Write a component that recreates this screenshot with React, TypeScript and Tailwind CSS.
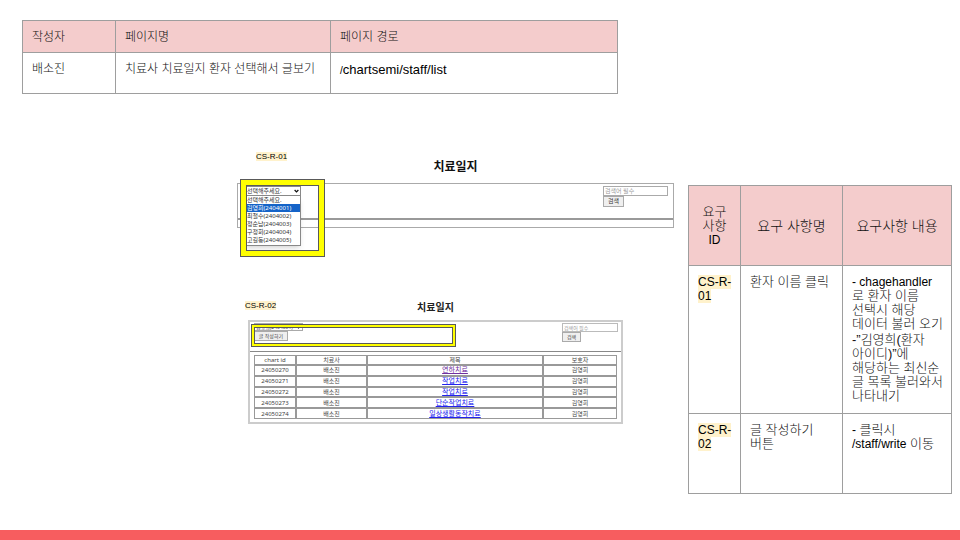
import React from "react";

const records = [
  { id: "24050270", title: "연하치료", visited: true },
  { id: "24050271", title: "작업치료", visited: false },
  { id: "24050272", title: "작업치료", visited: false },
  { id: "24050273", title: "단순작업치료", visited: false },
  { id: "24050274", title: "일상생활동작치료", visited: false },
];

const patients = [
  "선택해주세요.",
  "김영희(2404001)",
  "최철수(2404002)",
  "정순남(2404003)",
  "구정회(2404004)",
  "고길동(2404005)",
];

function PageInfo() {
  const head = "border border-[#9e9e9e] bg-[#f4cccc] px-[9px] text-left font-light";
  const cell = "border border-[#9e9e9e] px-[9px] pt-[7px] align-top";
  return (
    <table className="mt-5 ml-[22px] w-[596px] table-fixed border-collapse text-[12px] leading-[18px] text-[#111]">
      <colgroup>
        <col className="w-[93px]" />
        <col className="w-[215px]" />
        <col />
      </colgroup>
      <thead>
        <tr className="h-8">
          <th className={head}>작성자</th>
          <th className={head}>페이지명</th>
          <th className={head}>페이지 경로</th>
        </tr>
      </thead>
      <tbody>
        <tr className="h-[41px]">
          <td className={cell}>배소진</td>
          <td className={cell}>치료사 치료일지 환자 선택해서 글보기</td>
          <td className="border border-[#9e9e9e] px-[9px] pt-[8px] align-top font-normal text-black">
            <span className="text-[10px]">/</span>
            <span className="text-[13px]">chartsemi/staff/list</span>
          </td>
        </tr>
      </tbody>
    </table>
  );
}

function Tag({ children }: { children: React.ReactNode }) {
  return <span className="bg-[#fff2cc] font-normal whitespace-nowrap text-black">{children}</span>;
}

function Chevron() {
  return (
    <svg viewBox="0 0 8 8" className="pointer-events-none absolute top-1/2 right-[2px] size-[5px] -translate-y-1/2" fill="none" stroke="#111" strokeWidth="2">
      <path d="M1 2.5 4 5.5 7 2.5" />
    </svg>
  );
}

function ListScreen() {
  return (
    <figure>
      <figcaption className="grid h-8 grid-cols-[1fr_auto_1fr] items-start">
        <span className="pl-[19px] text-[8px] leading-[12px]">
          <Tag>CS-R-01</Tag>
        </span>
        <h2 className="pt-[8px] text-[12px] leading-4 font-bold text-[#111]">치료일지</h2>
      </figcaption>
      <div className="relative border border-[#aaa] font-['Noto_Sans','Noto_Sans_CJK_KR',sans-serif] text-[6px] font-normal text-[#333]">
        <div className="flex h-[34px] items-start justify-between pt-[2px] pr-[5px] pl-[7px]">
          <div className="relative w-[56px]">
            <select aria-label="환자 선택" className="block h-[10px] w-full appearance-none border border-[#888] bg-white pl-px leading-[8px]">
              <option>선택해주세요.</option>
            </select>
            <Chevron />
            <ul className="absolute top-[10px] left-0 z-10 w-full border border-t-0 border-[#888] bg-white pb-px shadow-md">
              {patients.map((name, i) => (
                <li key={name} className={i === 1 ? "bg-[#1463c8] pl-px leading-[8px] text-white" : "pl-px leading-[8px]"}>
                  {name}
                </li>
              ))}
            </ul>
          </div>
          <div className="w-[65px]">
            <input aria-label="검색어" placeholder="검색어 필수" className="block h-[10px] w-full border border-[#aaa] px-px leading-[8px] placeholder:text-[#999]" />
            <button className="block h-[11px] w-[21px] border border-[#aaa] bg-[#efefef] leading-[9px]">검색</button>
          </div>
        </div>
        <div className="h-[9px] border-t-2 border-[#999]" />
        <div className="pointer-events-none absolute -top-[5px] left-[2px] z-20 h-[78px] w-[85px] border border-[#595959]">
          <div className="h-full border-[5px] border-[#ffff00]">
            <div className="h-full border border-[#595959]" />
          </div>
        </div>
      </div>
    </figure>
  );
}

function ChartScreen() {
  const cell = "border border-[#999] p-0 text-center font-normal";
  return (
    <figure className="mt-[73px] mr-[51px] ml-[11px]">
      <figcaption className="grid h-[19px] grid-cols-[1fr_auto_1fr] items-start">
        <span className="-ml-[3px] text-[8px] leading-[10px]">
          <Tag>CS-R-02</Tag>
        </span>
        <h2 className="text-[10px] leading-[14px] font-bold text-[#222]">치료일지</h2>
      </figcaption>
      <div className="relative border-2 border-[#ccc] font-['Noto_Sans','Noto_Sans_CJK_KR',sans-serif] font-normal text-[#444]">
        <div className="flex h-[30px] items-start justify-between border-b border-[#888] pt-px pr-[3px] pl-[4px] text-[5px]">
          <div>
            <div className="relative w-[49px]">
              <select aria-label="환자" className="block h-[8px] w-full appearance-none border border-[#aaa] bg-white pl-px leading-[6px]">
                <option>김영희(2404001)</option>
              </select>
              <Chevron />
            </div>
            <button className="block h-[10px] w-[34px] border border-[#aaa] bg-[#efefef] leading-[8px]">글 작성하기</button>
          </div>
          <div className="w-[56px]">
            <input aria-label="검색어" placeholder="검색어 필수" className="block h-[9px] w-full border border-[#bbb] px-px leading-[7px] placeholder:text-[#999]" />
            <button className="block h-[10px] w-[19px] border border-[#aaa] bg-[#efefef] leading-[8px]">검색</button>
          </div>
        </div>
        <div className="px-[4px] pt-[3px] pb-[3px]">
          <table className="h-16 w-full table-fixed border-separate border-spacing-0 text-[6px] leading-[8px]">
            <colgroup>
              <col className="w-[42px]" />
              <col className="w-[71px]" />
              <col />
              <col className="w-[74px]" />
            </colgroup>
            <thead>
              <tr>
                <th className={cell}>chart id</th>
                <th className={cell}>치료사</th>
                <th className={cell}>제목</th>
                <th className={cell}>보호자</th>
              </tr>
            </thead>
            <tbody>
              {records.map((r) => (
                <tr key={r.id}>
                  <td className={cell}>{r.id}</td>
                  <td className={cell}>배소진</td>
                  <td className={cell}>
                    <a href="#" className={r.visited ? "text-[7px] text-[#7030a0] underline" : "text-[7px] text-[#2222ee] underline"}>
                      {r.title}
                    </a>
                  </td>
                  <td className={cell}>김영희</td>
                </tr>
              ))}
            </tbody>
          </table>
        </div>
        <div className="pointer-events-none absolute top-[2px] left-px h-[23px] w-[205px] border border-[#595959]">
          <div className="h-full border-2 border-[#ffff00]">
            <div className="h-full border border-[#595959]" />
          </div>
        </div>
      </div>
    </figure>
  );
}

function Latin({ children }: { children: React.ReactNode }) {
  return <span className="text-[12px] font-normal text-black">{children}</span>;
}

function Requirements() {
  const head = "border border-[#9e9e9e] bg-[#f4cccc] px-2 text-center font-light";
  const cell = "border border-[#9e9e9e] px-[9px] pt-[9px] align-top";
  return (
    <table className="mt-[91px] mr-2 ml-[14px] w-[264px] shrink-0 table-fixed border-collapse self-start text-[13px] leading-[14px] text-[#111]">
      <colgroup>
        <col className="w-[52px]" />
        <col className="w-[102px]" />
        <col />
      </colgroup>
      <thead>
        <tr className="h-20">
          <th className={head}>
            요구
            <br />
            사항
            <br />
            <Latin>ID</Latin>
          </th>
          <th className={head + " text-[14px]"}>요구 사항명</th>
          <th className={head + " text-[14px]"}>요구사항 내용</th>
        </tr>
      </thead>
      <tbody>
        <tr className="h-[148px]">
          <td className={cell + " text-[12px]"}>
            <Tag>
              CS-R-
              <br />
              01
            </Tag>
          </td>
          <td className={cell}>환자 이름 클릭</td>
          <td className={cell + " whitespace-nowrap"}>
            <p>
              <Latin>- chagehandler</Latin>
              <br />
              로 환자 이름
              <br />
              선택시 해당
              <br />
              데이터 불러 오기
            </p>
            <p className="mt-[2px]">
              -”김영희(환자
              <br />
              아이디)”에
              <br />
              해당하는 최신순
              <br />
              글 목록 불러와서
              <br />
              나타내기
            </p>
          </td>
        </tr>
        <tr className="h-20">
          <td className={cell + " text-[12px]"}>
            <Tag>
              CS-R-
              <br />
              02
            </Tag>
          </td>
          <td className={cell}>
            글 작성하기
            <br />
            버튼
          </td>
          <td className={cell + " whitespace-nowrap"}>
            <Latin>-</Latin> 클릭시
            <br />
            <Latin>/staff/write</Latin> 이동
          </td>
        </tr>
      </tbody>
    </table>
  );
}

export default function App() {
  return (
    <div className="flex min-h-screen flex-col bg-white font-['Liberation_Sans','Noto_Sans_CJK_KR',sans-serif] font-light">
      <PageInfo />
      <main className="flex">
        <div className="min-w-0 flex-1 pt-[57px] pl-[237px]">
          <ListScreen />
          <ChartScreen />
        </div>
        <Requirements />
      </main>
      <footer className="mt-auto h-[10px] bg-[#f75d5f]" />
    </div>
  );
}
